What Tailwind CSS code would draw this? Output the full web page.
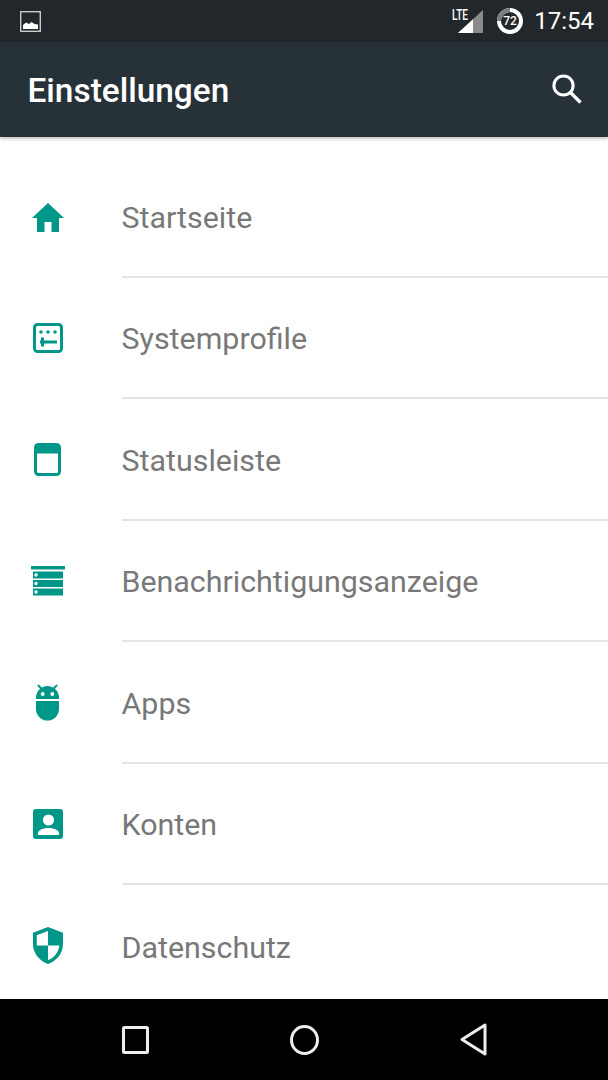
<!DOCTYPE html>
<html lang="de"><head><meta charset="utf-8"><script src="https://cdn.jsdelivr.net/npm/@tailwindcss/browser@4"></script></head>
<body class="m-0 bg-white">
<div class="w-[608px] h-[1080px] flex flex-col overflow-hidden font-['Roboto',sans-serif] relative">
  <div class="h-[42px] bg-[#21272b] flex items-center pl-[20px] pr-[14px] shrink-0">
    <svg class="w-[21px] h-[21px]" viewBox="0 0 21 21"><rect x="0.75" y="0.75" width="19.5" height="19.5" fill="none" stroke="#e8e8e8" stroke-width="1.2"/><path d="M3 18V14L6 11.5L9 13L11.5 11L14.5 13L18 13.5V18Z" fill="#fff"/></svg>
    <div class="flex-1"></div>
    <svg class="w-[34px] h-[26px] mr-[12px]" viewBox="0 0 34 26"><path d="M8 25L33 2V25Z" fill="#8a8a8a"/><path d="M8 25L23 11.2V25Z" fill="#fff"/><text x="2" y="12" font-family="Roboto" font-size="14" font-weight="500" fill="#fff" textLength="16" lengthAdjust="spacingAndGlyphs">LTE</text></svg>
    <svg class="w-[28px] h-[28px] mr-[10px]" viewBox="0 0 28 28"><circle cx="14" cy="14" r="11" fill="none" stroke="#fff" stroke-width="4"/><path d="M3 14A11 11 0 0 1 14 3" fill="none" stroke="#7c7c7c" stroke-width="4"/><text x="14" y="18" text-anchor="middle" font-family="Roboto" font-size="12" font-weight="500" fill="#fff">72</text></svg>
    <span class="text-[24px] leading-none text-white font-normal">17:54</span>
  </div>
  <div class="h-[94.5px] bg-[#263238] flex items-center pl-[27.5px] pr-[26px] shrink-0 z-10 shadow-[0_1px_4px_rgba(0,0,0,0.35)]">
    <span class="text-[33.4px] leading-none font-medium text-white flex-1 translate-y-[1px]">Einstellungen</span>
    <svg class="w-[30px] h-[30px]" viewBox="0 0 30 30"><circle cx="11.5" cy="11.5" r="9.6" fill="none" stroke="#fff" stroke-width="3"/><path d="M18.5 18.5L28.5 28.5" stroke="#fff" stroke-width="3.4"/></svg>
  </div>
  <div class="flex-1 pt-[19.5px] overflow-hidden text-[30.4px] text-[#787878]">
    <div class="h-[121.5px] flex items-center">
      <div class="w-[122px] flex justify-center pr-[27px] shrink-0"><svg class="w-[34px] h-[30px]" viewBox="0 0 34 30" fill="#009688"><path d="M17 1L33 16H28V30H20.5V20H13.5V30H6V16H1Z"/></svg></div>
      <div class="flex-1 h-full flex items-center border-b-2 border-[#e4e4e4]"><span class="translate-y-[2px] -translate-x-[0.5px]">Startseite</span></div>
    </div>
    <div class="h-[121.5px] flex items-center">
      <div class="w-[122px] flex justify-center pr-[27px] shrink-0"><svg class="w-[30px] h-[30px]" viewBox="0 0 30 30"><rect x="1.5" y="1.5" width="27" height="27" rx="3" fill="none" stroke="#009688" stroke-width="3"/><g fill="#009688"><circle cx="8" cy="9" r="1.8"/><circle cx="15" cy="9" r="1.8"/><circle cx="22" cy="9" r="1.8"/><rect x="7" y="17.5" width="17" height="3"/><rect x="8" y="14.5" width="3" height="9"/></g></svg></div>
      <div class="flex-1 h-full flex items-center border-b-2 border-[#e4e4e4]"><span class="translate-y-[2px] -translate-x-[0.5px]">Systemprofile</span></div>
    </div>
    <div class="h-[121.5px] flex items-center">
      <div class="w-[122px] flex justify-center pr-[27px] shrink-0"><svg class="w-[27px] h-[33px]" viewBox="0 0 27 33"><rect x="1.5" y="1.5" width="24" height="30" rx="3" fill="none" stroke="#009688" stroke-width="3"/><rect x="1.5" y="1.5" width="24" height="9" fill="#009688"/></svg></div>
      <div class="flex-1 h-full flex items-center border-b-2 border-[#e4e4e4]"><span class="translate-y-[2px] -translate-x-[0.5px]">Statusleiste</span></div>
    </div>
    <div class="h-[121.5px] flex items-center">
      <div class="w-[122px] flex justify-center pr-[27px] shrink-0"><svg class="w-[34px] h-[30px]" viewBox="0 0 34 30" fill="#009688"><rect x="0" y="0" width="34" height="3.5"/><path fill-rule="evenodd" d="M2 5.5H32V12.5H2ZM5 7.3a1.7 1.7 0 1 0 0.01 0Z"/><path fill-rule="evenodd" d="M2 14H32V21H2ZM5 15.8a1.7 1.7 0 1 0 0.01 0Z"/><path fill-rule="evenodd" d="M2 22.5H32V29.5H2ZM5 24.3a1.7 1.7 0 1 0 0.01 0Z"/></svg></div>
      <div class="flex-1 h-full flex items-center border-b-2 border-[#e4e4e4]"><span class="translate-y-[2px] -translate-x-[0.5px]">Benachrichtigungsanzeige</span></div>
    </div>
    <div class="h-[121.5px] flex items-center">
      <div class="w-[122px] flex justify-center pr-[27px] shrink-0"><svg class="w-[25px] h-[37px]" viewBox="0 0 26 37" preserveAspectRatio="none" fill="#009688"><path d="M1 14A12 12 0 0 1 25 14V15H1ZM1 17H25V25A12 11.5 0 0 1 1 25Z"/><circle cx="8" cy="10" r="2" fill="#fff"/><circle cx="18" cy="10" r="2" fill="#fff"/><path d="M7 5L3 1M19 5L23 1" stroke="#009688" stroke-width="2"/></svg></div>
      <div class="flex-1 h-full flex items-center border-b-2 border-[#e4e4e4]"><span class="translate-y-[2px] -translate-x-[0.5px]">Apps</span></div>
    </div>
    <div class="h-[121.5px] flex items-center">
      <div class="w-[122px] flex justify-center pr-[27px] shrink-0"><svg class="w-[30px] h-[30px]" viewBox="0 0 30 30"><rect width="30" height="30" rx="3" fill="#009688"/><circle cx="15.5" cy="11" r="5.6" fill="#fff"/><path d="M5 26V24.5C5 20.5 11 19 15.5 19S26 20.5 26 24.5V26Z" fill="#fff"/></svg></div>
      <div class="flex-1 h-full flex items-center border-b-2 border-[#e4e4e4]"><span class="translate-y-[2px] -translate-x-[0.5px]">Konten</span></div>
    </div>
    <div class="h-[121.5px] flex items-center">
      <div class="w-[122px] flex justify-center pr-[27px] shrink-0"><svg class="w-[30px] h-[37px]" viewBox="0 0 32 38" preserveAspectRatio="none"><path d="M16 0L32 6V18C32 27 25 35 16 38C7 35 0 27 0 18V6Z" fill="#009688"/><path d="M16 4L4 8.5V19H16ZM16 19V34C22 32 27.5 26 28 19Z" fill="#fff"/></svg></div>
      <div class="flex-1 h-full flex items-center"><span class="translate-y-[2px] -translate-x-[0.5px]">Datenschutz</span></div>
    </div>
  </div>
  <div class="h-[81px] bg-black shrink-0 relative flex items-center">
    <div class="w-full flex items-center justify-between pl-[122px] pr-[121px]">
      <svg class="w-[27px] h-[28px]" viewBox="0 0 27 28"><rect x="1.5" y="1.5" width="24" height="25" rx="1" fill="none" stroke="#eee" stroke-width="3"/></svg>
      <svg class="w-[29px] h-[30px]" viewBox="0 0 29 30"><ellipse cx="14.5" cy="15" rx="13" ry="13.5" fill="none" stroke="#eee" stroke-width="3"/></svg>
      <svg class="w-[27px] h-[33px]" viewBox="0 0 27 33"><path d="M25 2V31L2 16.5Z" fill="none" stroke="#eee" stroke-width="3" stroke-linejoin="round"/></svg>
    </div>
  </div>
</div>
</body></html>
